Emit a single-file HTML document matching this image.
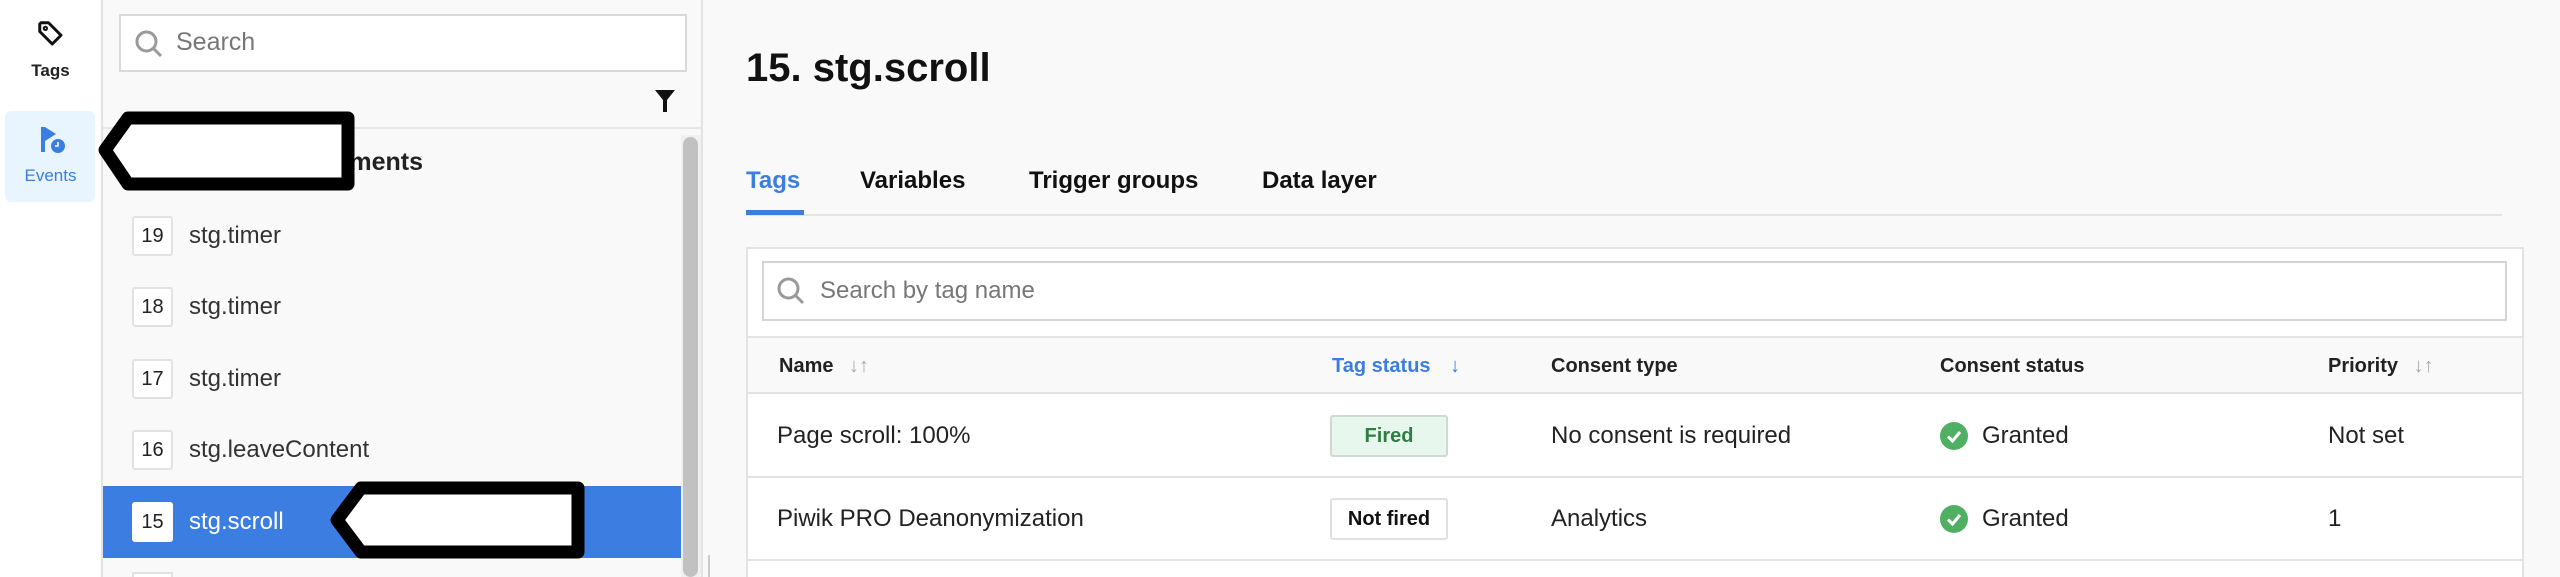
<!DOCTYPE html>
<html style="width:2560px;height:577px;overflow:hidden"><head><meta charset="utf-8"><style>
*{box-sizing:border-box;margin:0;padding:0}
body{width:2560px;height:577px;overflow:hidden;background:#f9f9f9;font-family:"Liberation Sans",sans-serif;color:#1a1a1a;position:relative}
.abs{position:absolute}
.nav{left:0;top:0;width:103px;height:577px;background:#fff;border-right:2px solid #e3e3e3}
.side{left:103px;top:0;width:600px;height:577px;background:#f9f9f9;border-right:2px solid #e3e3e3;overflow:hidden}
.item{position:absolute;left:0;width:578px;height:72px;display:flex;align-items:center;font-size:24px;color:#333}
.num{width:41px;height:40px;border:2px solid #e2e2e2;background:#fff;border-radius:3px;margin-left:29px;margin-right:16px;display:flex;align-items:center;justify-content:center;font-size:20px;color:#222}
.th{position:absolute;top:338px;height:56px;line-height:56px;font-size:20px;font-weight:bold;color:#222}
.td{position:absolute;font-size:24px;color:#222}
</style></head><body>
<div class="abs nav">
  <svg class="abs" style="left:36px;top:19px" width="30" height="30" viewBox="0 0 24 24" fill="none" stroke="#111" stroke-width="2.4" stroke-linejoin="round"><path d="M3 4 L3 10 L13 20 L20 13 L10 3 L4 3 Z"/><circle cx="7.5" cy="7.5" r="1.3" stroke-width="1.6"/></svg>
  <div class="abs" style="left:0;width:101px;top:61px;text-align:center;font-size:17px;font-weight:bold;color:#222">Tags</div>
  <div class="abs" style="left:5px;top:111px;width:90px;height:91px;background:#e8f4fe;border-radius:6px"></div>
  <svg class="abs" style="left:38px;top:125px" width="30" height="30" viewBox="0 0 30 30"><rect x="3" y="2" width="4" height="25" fill="#3b7de0"/><path d="M7 2 L18 9 L7 16 Z" fill="#3b7de0"/><circle cx="20" cy="21" r="7" fill="#3b7de0"/><path d="M20 17 V21 H17" stroke="#fff" stroke-width="1.6" fill="none"/></svg>
  <div class="abs" style="left:0;width:101px;top:166px;text-align:center;font-size:17px;color:#3b7de0">Events</div>
</div>
<div class="abs side">
  <div class="abs" style="left:16px;top:14px;width:568px;height:58px;background:#fff;border:2px solid #d9d9d9"></div>
  <svg class="abs" style="left:31px;top:29px" width="30" height="30" viewBox="0 0 30 30" fill="none" stroke="#9a9a9a" stroke-width="3"><circle cx="12.5" cy="12.5" r="9.5"/><path d="M19.5 19.5 L27 27"/></svg>
  <div class="abs" style="left:73px;top:28px;font-size:25px;color:#777">Search</div>
  <svg class="abs" style="left:551px;top:89px" width="22" height="24" viewBox="0 0 22 24"><path d="M1 1 H21 L13 11 V23 H9 V11 Z" fill="#111"/></svg>
  <div class="abs" style="left:0;top:127px;width:598px;height:2px;background:#e6e6e6"></div>
  <div class="abs" style="left:578px;top:135px;width:20px;height:442px;background:#f0f0f0"></div>
  <div class="abs" style="left:580px;top:137px;width:15px;height:440px;background:#c1c1c1;border-radius:8px"></div>
  <div class="abs" style="left:0;width:320px;text-align:right;top:148px;font-size:25px;font-weight:bold;color:#222">Events and moments</div>
  <div class="item" style="top:200px"><div class="num">19</div>stg.timer</div>
  <div class="item" style="top:271px"><div class="num">18</div>stg.timer</div>
  <div class="item" style="top:343px"><div class="num">17</div>stg.timer</div>
  <div class="item" style="top:414px"><div class="num">16</div>stg.leaveContent</div>
  <div class="item" style="top:486px;background:#3b7de0;color:#fff"><div class="num" style="border-color:#fff">15</div>stg.scroll</div>
  <div class="abs" style="left:29px;top:572px;width:41px;height:5px;border:2px solid #e2e2e2;border-bottom:none;background:#fff"></div>
</div>
<div class="abs" style="left:708px;top:555px;width:2px;height:22px;background:#ccc"></div>
<svg class="abs" style="left:0;top:0" width="700" height="577">
  <path d="M105 150 L128 118 H348 V184 H128 Z" fill="#fff" stroke="#000" stroke-width="13" stroke-linejoin="round"/>
  <path d="M337 520 L361 488 H578 V552 H361 Z" fill="#fff" stroke="#000" stroke-width="13" stroke-linejoin="round"/>
</svg>
<div class="abs" style="left:746px;top:46px;font-size:40px;font-weight:bold;color:#111">15. stg.scroll</div>
<div class="abs" style="left:746px;top:167px;font-size:24px;font-weight:bold;color:#3b7de0">Tags</div>
<div class="abs" style="left:860px;top:167px;font-size:24px;font-weight:bold;color:#111">Variables</div>
<div class="abs" style="left:1029px;top:167px;font-size:24px;font-weight:bold;color:#111">Trigger groups</div>
<div class="abs" style="left:1262px;top:167px;font-size:24px;font-weight:bold;color:#111">Data layer</div>
<div class="abs" style="left:746px;top:214px;width:1756px;height:2px;background:#e3e3e3"></div>
<div class="abs" style="left:746px;top:210px;width:58px;height:5px;background:#3b7de0"></div>
<div class="abs" style="left:746px;top:247px;width:1778px;height:330px;background:#fff;border:2px solid #e3e3e3;border-bottom:none"></div>
<div class="abs" style="left:762px;top:261px;width:1745px;height:60px;background:#fff;border:2px solid #d4d4d4"></div>
<svg class="abs" style="left:776px;top:276px" width="30" height="30" viewBox="0 0 30 30" fill="none" stroke="#9a9a9a" stroke-width="3"><circle cx="12.5" cy="12.5" r="9.5"/><path d="M19.5 19.5 L27 27"/></svg>
<div class="abs" style="left:820px;top:277px;font-size:24px;color:#777">Search by tag name</div>
<div class="abs" style="left:748px;top:336px;width:1774px;height:58px;background:#f9f9f9;border-top:2px solid #e3e3e3;border-bottom:2px solid #e3e3e3"></div>
<div class="th" style="left:779px">Name <span style="color:#aaa;font-weight:normal;margin-left:10px">↓↑</span></div>
<div class="th" style="left:1332px;color:#3b7de0">Tag status <span style="margin-left:14px">↓</span></div>
<div class="th" style="left:1551px">Consent type</div>
<div class="th" style="left:1940px">Consent status</div>
<div class="th" style="left:2328px">Priority <span style="color:#aaa;font-weight:normal;margin-left:10px">↓↑</span></div>
<div class="abs" style="left:748px;top:476px;width:1774px;height:2px;background:#e3e3e3"></div>
<div class="abs" style="left:748px;top:559px;width:1774px;height:2px;background:#e3e3e3"></div>
<div class="td" style="left:777px;top:422px">Page scroll: 100%</div>
<div class="abs" style="left:1330px;top:415px;width:118px;height:42px;background:#e7f7ed;border:2px solid #cfd8d2;border-radius:3px;text-align:center;line-height:38px;font-size:20px;font-weight:bold;color:#2e7d43">Fired</div>
<div class="td" style="left:1551px;top:422px">No consent is required</div>
<svg class="abs" style="left:1940px;top:422px" width="28" height="28" viewBox="0 0 28 28"><circle cx="14" cy="14" r="14" fill="#4fb064"/><path d="M8 14.5 L12.5 19 L20 10" stroke="#fff" stroke-width="3" fill="none"/></svg>
<div class="td" style="left:1982px;top:422px">Granted</div>
<div class="td" style="left:2328px;top:422px">Not set</div>
<div class="td" style="left:777px;top:505px">Piwik PRO Deanonymization</div>
<div class="abs" style="left:1330px;top:498px;width:118px;height:42px;background:#fff;border:2px solid #e0e0e0;border-radius:3px;text-align:center;line-height:38px;font-size:20px;font-weight:bold;color:#111">Not fired</div>
<div class="td" style="left:1551px;top:505px">Analytics</div>
<svg class="abs" style="left:1940px;top:505px" width="28" height="28" viewBox="0 0 28 28"><circle cx="14" cy="14" r="14" fill="#4fb064"/><path d="M8 14.5 L12.5 19 L20 10" stroke="#fff" stroke-width="3" fill="none"/></svg>
<div class="td" style="left:1982px;top:505px">Granted</div>
<div class="td" style="left:2328px;top:505px">1</div>
</body></html>
